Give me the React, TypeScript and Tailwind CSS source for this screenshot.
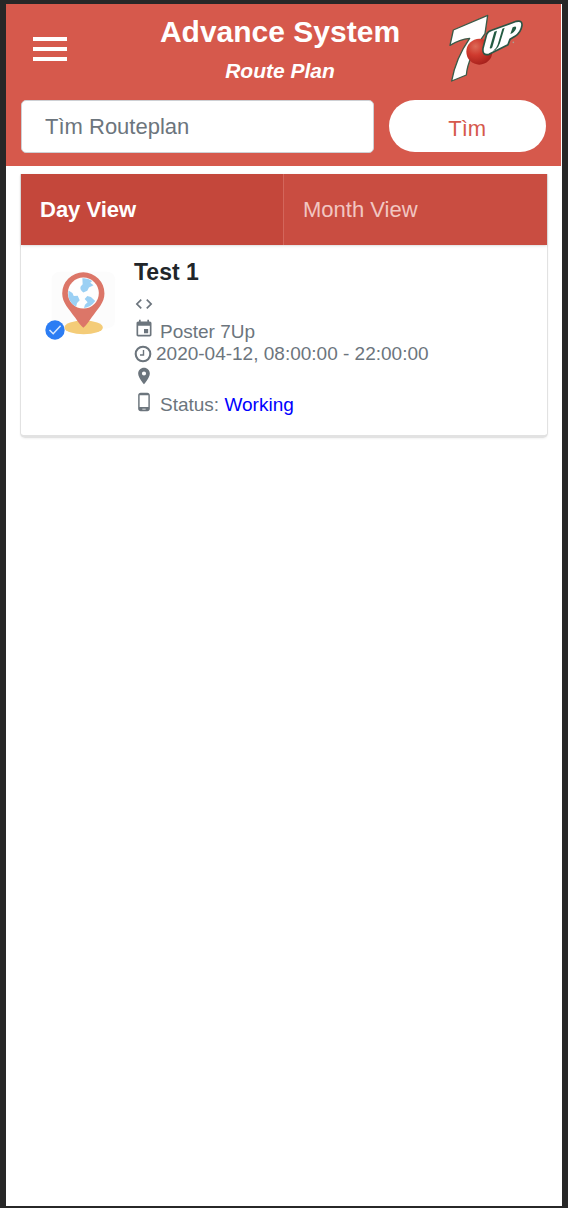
import { useState } from "react";

function SevenUpLogo() {
  return (
    <svg viewBox="30 24 225 210" className="h-[70px] w-[75px]" role="img" aria-label="7UP">
      <defs>
        <radialGradient id="ball" cx="0.35" cy="0.3" r="0.75">
          <stop offset="0" stopColor="#dd6b58" />
          <stop offset="0.45" stopColor="#cf3a2e" />
          <stop offset="1" stopColor="#a5201b" />
        </radialGradient>
      </defs>
      <path
        d="M146 31 L43 75 L33 121 Q62 103 92 100 Q50 160 38 228 L82 210 Q86 158 138 86 Z"
        fill="#fff"
        stroke="#3a5a48"
        strokeWidth="4"
        strokeLinejoin="round"
      />
      <circle cx="121" cy="140" r="39" fill="url(#ball)" />
      <path
        d="M143 88 Q146 80 158 76 L232 49 Q250 45 249 61 Q246 82 228 94 L213 103 L207 119 L150 148 Q129 153 132 130 Z"
        fill="#fff"
        stroke="#2c5545"
        strokeWidth="5"
        strokeLinejoin="round"
      />
      <path d="M166 80 L174 77 L160 127 Q156 133 152 129 Z" fill="#235b42" />
      <path d="M190 71 L197 68 L183 114 Q179 127 169 135 L162 138 Q172 131 176 119 Z" fill="#235b42" />
      <path d="M221 67 L214 87 Q226 83 231 71 Q234 61 221 67 Z" fill="#235b42" />
      <circle cx="223" cy="112" r="2.5" fill="#a5a99c" />
    </svg>
  );
}

function MapMarker() {
  return (
    <svg viewBox="45 45 200 200" className="h-[66px] w-[66px]" aria-hidden="true">
      <rect x="50" y="50" width="192" height="172" rx="24" fill="#fcfcfc" />
      <ellipse cx="147" cy="219" rx="58" ry="21" fill="#f4cc78" />
      <path d="M146 220 Q136 212 121 189 C102 162 82 144 82 116 A64 64 0 0 1 210 116 C210 144 190 162 171 189 Q156 212 146 220 Z" fill="#dc7668" />
      <circle cx="146" cy="115" r="47" fill="#fefefe" />
      <path d="M143 70 Q159 68 173 78 L167 84 L177 91 L163 98 L158 108 L146 113 Q134 104 138 95 L144 88 Z" fill="#9bd0f4" />
      <path d="M101 107 L113 115 L117 124 L129 123 L135 137 L127 145 L124 156 Q96 142 101 107 Z" fill="#9bd0f4" />
      <path d="M150 133 L158 124 L169 127 L182 139 Q168 159 148 160 L151 150 L159 143 Z" fill="#9bd0f4" />
    </svg>
  );
}

const icon = "shrink-0 fill-[#6c757d]";

function CodeIcon() {
  return (
    <svg viewBox="0 0 24 24" className={`${icon} h-5 w-5`} aria-hidden="true">
      <path d="M9.4 16.6 4.8 12l4.6-4.6L8 6l-6 6 6 6 1.4-1.4zm5.2 0 4.6-4.6-4.6-4.6L16 6l6 6-6 6-1.4-1.4z" />
    </svg>
  );
}

function CalendarIcon() {
  return (
    <svg viewBox="0 0 24 24" className={`${icon} h-5 w-5`} aria-hidden="true">
      <path d="M17 12h-5v5h5v-5zM16 1v2H8V1H6v2H5c-1.11 0-1.99.9-1.99 2L3 19c0 1.1.89 2 2 2h14c1.1 0 2-.9 2-2V5c0-1.1-.9-2-2-2h-1V1h-2zm3 18H5V8h14v11z" />
    </svg>
  );
}

function ClockIcon() {
  return (
    <svg viewBox="0 0 18 18" className="h-[18px] w-[18px] shrink-0" fill="none" stroke="#6c757d" aria-hidden="true">
      <circle cx="9" cy="9" r="7.3" strokeWidth="2.1" />
      <path d="M9.5 5v5H6" strokeWidth="1.4" />
    </svg>
  );
}

function PinIcon() {
  return (
    <svg viewBox="0 0 24 24" className={`${icon} h-5 w-5`} aria-hidden="true">
      <path d="M12 2C8.13 2 5 5.13 5 9c0 5.25 7 13 7 13s7-7.75 7-13c0-3.87-3.13-7-7-7zm0 9.5a2.5 2.5 0 1 1 0-5 2.5 2.5 0 0 1 0 5z" />
    </svg>
  );
}

function PhoneIcon() {
  return (
    <svg viewBox="0 0 24 24" className={`${icon} h-5 w-5`} aria-hidden="true">
      <path d="M16 1H8C6.34 1 5 2.34 5 4v16c0 1.66 1.34 3 3 3h8c1.66 0 3-1.34 3-3V4c0-1.66-1.34-3-3-3zm-2 20h-4v-1h4v1zm3.25-3H6.75V4h10.5v14z" />
    </svg>
  );
}

export default function App() {
  const [view, setView] = useState("day");
  const tabStyle = (name: string) =>
    view === name
      ? "bg-[#c4473b] font-bold text-white"
      : "bg-[#c94d41] font-light text-[#f2c6c1]";

  return (
    <div className="flex min-h-screen flex-col bg-[#272727] px-1.5 pt-1 pb-0.5 font-['Liberation_Sans',Arial,sans-serif]">
      <div className="flex-1 bg-white">
        <header className="mr-px bg-[#d6594c] px-[15px] pb-[13px]">
          <div className="grid h-24 grid-cols-[100px_1fr_107px] items-start">
            <button type="button" aria-label="Open menu" className="mt-8 ml-3 flex h-[26px] w-[34px] flex-col justify-between py-px">
              <span className="h-1 w-full bg-white" />
              <span className="h-1 w-full bg-white" />
              <span className="h-1 w-full bg-white" />
            </button>
            <div className="pt-2.5 text-center whitespace-nowrap text-white">
              <h1 className="text-[30px] leading-9 font-bold">Advance System</h1>
              <p className="pt-1 text-[21px] leading-[34px] font-bold italic">Route Plan</p>
            </div>
            <div className="flex justify-start pt-[9px] pl-2.5">
              <SevenUpLogo />
            </div>
          </div>
          <form className="flex gap-[15px]" onSubmit={(event) => event.preventDefault()}>
            <input
              type="search"
              aria-label="Tìm Routeplan"
              placeholder="Tìm Routeplan"
              className="h-[53px] min-w-0 flex-1 rounded-[5px] border border-[#ced0d4] bg-white px-[23px] text-[22px] text-[#495057] placeholder:text-[#6c757d]"
            />
            <button type="submit" className="h-[52px] w-[30%] shrink-0 rounded-full bg-white pt-1 text-[22px] text-[#d6594c]">
              Tìm
            </button>
          </form>
        </header>
        <main className="px-3.5 pt-2">
          <section className="rounded-b-[5px] border-x border-b-3 border-[#e2e2e2] shadow-xs">
            <div role="tablist" className="grid grid-cols-2 shadow-sm">
              <button
                type="button"
                role="tab"
                aria-selected={view === "day"}
                onClick={() => setView("day")}
                className={`h-[71px] border-r border-[#d3665b] px-[19px] text-left text-[22px] ${tabStyle("day")}`}
              >
                Day View
              </button>
              <button
                type="button"
                role="tab"
                aria-selected={view === "month"}
                onClick={() => setView("month")}
                className={`h-[71px] px-[19px] text-left text-[22px] ${tabStyle("month")}`}
              >
                Month View
              </button>
            </div>
            <article className="flex gap-[18px] pt-[13px] pr-4 pb-[19px] pl-[29px]">
              <div className="relative h-[68px] w-[66px] pt-3">
                <MapMarker />
                <svg viewBox="0 0 20 20" className="absolute top-[62px] -left-[5px] h-5 w-5" role="img" aria-label="Selected">
                  <circle cx="10" cy="10" r="9.7" fill="#2c7df4" />
                  <path d="m4.5 10 3.7 3.7 7.4-7.9" fill="none" stroke="#d8e8ff" strokeWidth="1.5" />
                </svg>
              </div>
              <div className="min-w-0 flex-1 text-[19px] leading-[22px] text-[#6c757d]">
                <h2 className="text-[23px] leading-7 font-bold text-[#212529]">Test 1</h2>
                <div className="flex h-[35px] items-center">
                  <CodeIcon />
                </div>
                <div className="flex h-[22px] items-center gap-1.5">
                  <span className="pb-1.5">
                    <CalendarIcon />
                  </span>
                  <span>Poster 7Up</span>
                </div>
                <div className="flex h-[22px] items-center gap-1">
                  <ClockIcon />
                  <span>2020-04-12, 08:00:00 - 22:00:00</span>
                </div>
                <div className="flex h-[22px] items-center">
                  <PinIcon />
                </div>
                <div className="flex h-[29px] items-end gap-1.5">
                  <span className="self-center">
                    <PhoneIcon />
                  </span>
                  <span>
                    Status: <span className="text-[#0000ff]">Working</span>
                  </span>
                </div>
              </div>
            </article>
          </section>
        </main>
      </div>
    </div>
  );
}
